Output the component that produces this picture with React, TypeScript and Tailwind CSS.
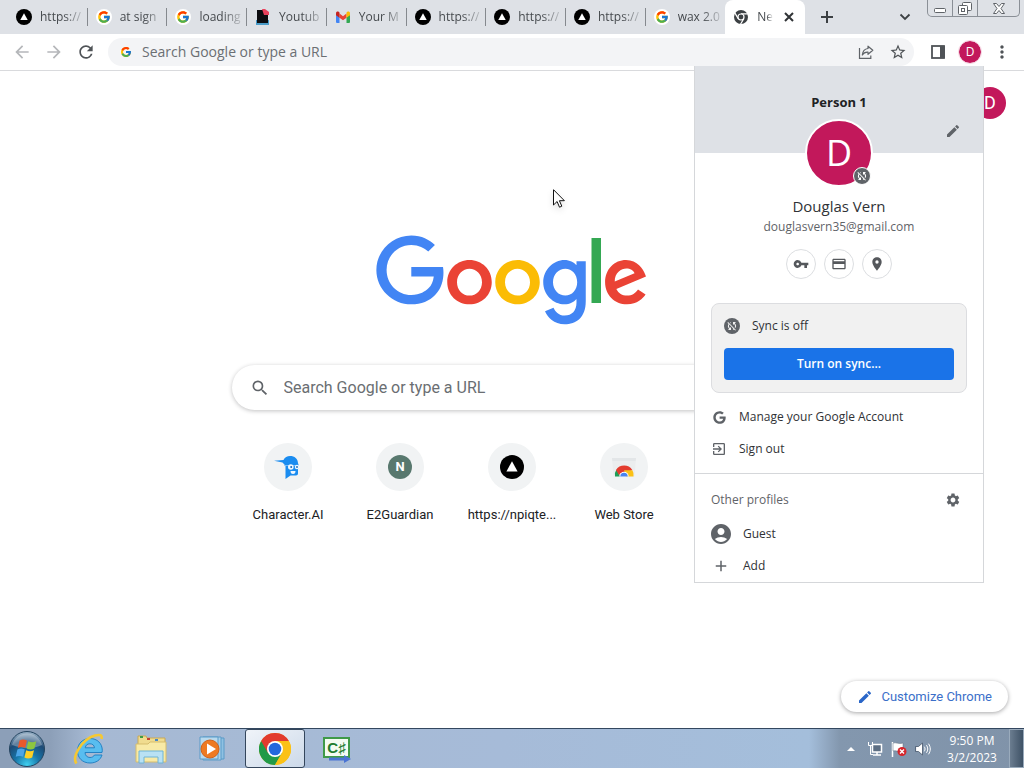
import React from "react";
import { FcGoogle } from "react-icons/fc";
import { FaGoogle } from "react-icons/fa";
import {
  MdAccountCircle,
  MdAdd,
  MdArrowBack,
  MdArrowForward,
  MdCreditCard,
  MdExitToApp,
  MdMoreVert,
  MdPlace,
  MdRefresh,
  MdSearch,
  MdSettings,
  MdStarBorder,
  MdSyncDisabled,
  MdVpnKey,
} from "react-icons/md";

type IconKind = "vercel" | "google" | "file" | "gmail" | "chrome";

const tabs: { icon: IconKind; title: string }[] = [
  { icon: "vercel", title: "https://" },
  { icon: "google", title: "at sign" },
  { icon: "google", title: "loading" },
  { icon: "file", title: "Youtub" },
  { icon: "gmail", title: "Your M" },
  { icon: "vercel", title: "https://" },
  { icon: "vercel", title: "https://" },
  { icon: "vercel", title: "https://" },
  { icon: "google", title: "wax 2.0" },
];

function PencilIcon({ className }: { className: string }) {
  return (
    <svg viewBox="0 0 24 24" className={className} fill="currentColor" aria-hidden="true">
      <path d="M3 17.250V21h3.750L17.810 9.940l-3.750-3.750L3 17.250zM20.710 7.040a1 1 0 0 0 0-1.410l-2.340-2.340a1 1 0 0 0-1.410 0l-1.830 1.830 3.750 3.750 1.830-1.830z" />
    </svg>
  );
}

function TriangleBadge({ className }: { className: string }) {
  return (
    <svg viewBox="0 0 24 24" className={className} aria-hidden="true">
      <circle cx="12" cy="12" r="12" fill="#000" />
      <path d="M12 6.200 17.600 16.500H6.400z" fill="#fff" />
    </svg>
  );
}

function TabIcon({ kind }: { kind: IconKind }) {
  if (kind === "vercel") return <TriangleBadge className="size-4 shrink-0" />;
  if (kind === "google")
    return (
      <span className="flex size-4 shrink-0 items-center justify-center rounded-full bg-white">
        <FcGoogle className="size-[14px]" />
      </span>
    );
  if (kind === "file")
    return (
      <svg viewBox="0 0 16 16" className="size-4 shrink-0" aria-hidden="true">
        <path d="M1 11h13v5H1z" fill="#4a9cc9" />
        <path d="M2 1h7l4 4v9H2z" fill="#0c0d10" />
        <path d="M7 0h3l4 3v3H9z" fill="#e8415c" />
      </svg>
    );
  if (kind === "gmail")
    return (
      <svg viewBox="0 0 16 16" className="size-4 shrink-0" aria-hidden="true">
        <path d="M1 5.500 4.500 8v6H2a1 1 0 0 1-1-1z" fill="#4285f4" />
        <path d="M15 5.500 11.500 8v6H14a1 1 0 0 0 1-1z" fill="#34a853" />
        <path d="M4.500 4.500 8 7.200l3.500-2.700v4.200L8 11.300 4.500 8.700z" fill="#ea4335" />
        <path d="M1 4.300C1 2.700 2.700 2 3.900 2.900l.6.500v5.300L1 6.200z" fill="#c5221f" />
        <path d="M15 4.300c0-1.600-1.700-2.300-2.900-1.400l-.6.500v5.300L15 6.200z" fill="#fbbc04" />
      </svg>
    );
  return (
    <svg viewBox="0 0 16 16" className="size-4 shrink-0" aria-hidden="true">
      <circle cx="8" cy="8" r="7" fill="#3c4043" />
      <circle cx="8" cy="8" r="3.600" fill="#fff" />
      <path d="M8 4.800h7M5.200 9.600 1.700 3.600M10.800 9.600 7.500 15.300" stroke="#fff" strokeWidth="1.200" />
      <circle cx="8" cy="8" r="2.400" fill="#3c4043" />
    </svg>
  );
}

function WindowButtons() {
  return (
    <div className="flex h-[17px] rounded-b-[5px] border border-t-0 border-[#8a8f96] text-[#5f6368]">
      <button aria-label="Minimize" className="flex w-[25px] items-end justify-center border-r border-[#8a8f96] pb-[3px]">
        <svg viewBox="0 0 12 5" className="h-[5px] w-3">
          <rect x=".5" y=".5" width="11" height="4" rx="1" fill="#fff" stroke="#5f6368" />
        </svg>
      </button>
      <button aria-label="Restore" className="flex w-[25px] items-center justify-center border-r border-[#8a8f96]">
        <svg viewBox="0 0 14 13" className="h-[13px] w-[14px]" stroke="#5f6368">
          <rect x="4.500" y=".5" width="9" height="8" rx="1" fill="#fff" />
          <rect x=".5" y="3.500" width="9" height="9" rx="1" fill="#fff" />
          <rect x="3.500" y="6.500" width="3" height="3" fill="#fff" />
        </svg>
      </button>
      <button aria-label="Close window" className="flex w-[41px] items-center justify-center">
        <svg viewBox="0 0 12 11" className="h-[11px] w-3">
          <path d="M.5.5h3L6 3.500 8.500.5h3L8 5.500l3.500 5h-3L6 7.500l-2.500 3h-3L4 5.500z" fill="#fff" stroke="#5f6368" />
        </svg>
      </button>
    </div>
  );
}

function TabStrip() {
  return (
    <div className="flex h-[34px] shrink-0 bg-[#dee1e6] pl-2">
      <div className="flex min-w-0 flex-1">
        {tabs.map((tab, i) => (
          <div key={i} className="flex min-w-0 flex-1 items-center">
            <button className="flex min-w-0 flex-1 items-center gap-2 pl-2 text-xs text-[#45494d]">
              <TabIcon kind={tab.icon} />
              <span className="min-w-0 flex-1 text-left whitespace-nowrap [mask-image:linear-gradient(to_right,black_50%,transparent)]">
                {tab.title}
              </span>
            </button>
            {i < tabs.length - 1 && <span className="h-[18px] w-px bg-[#85898e]" />}
          </div>
        ))}
        <div className="flex min-w-0 flex-1">
          <div className="flex min-w-0 flex-1 items-center gap-2 rounded-t-lg bg-white px-2 text-xs text-[#45494d]">
            <TabIcon kind="chrome" />
            <span className="min-w-0 flex-1 whitespace-nowrap [mask-image:linear-gradient(to_right,black_60%,transparent)]">
              New
            </span>
            <button aria-label="Close tab">
              <svg viewBox="0 0 16 16" className="size-4" stroke="#303336" strokeWidth="2">
                <path d="m4 4 8 8m0-8-8 8" />
              </svg>
            </button>
          </div>
        </div>
      </div>
      <div className="flex w-[219px] shrink-0 items-start">
        <button aria-label="New tab" className="flex h-[34px] w-11 items-center justify-center">
          <svg viewBox="0 0 14 14" className="size-[14px]" stroke="#3c4043" strokeWidth="2">
            <path d="M7 1v12M1 7h12" />
          </svg>
        </button>
        <button aria-label="Search tabs" className="ml-auto flex h-[34px] w-11 items-center justify-center">
          <svg viewBox="0 0 12 12" className="size-3" fill="none" stroke="#3c4043" strokeWidth="1.800">
            <path d="m1.500 3.500 4.500 4.500 4.500-4.500" />
          </svg>
        </button>
        <div className="mr-1">
          <WindowButtons />
        </div>
      </div>
    </div>
  );
}

function Toolbar() {
  return (
    <div className="flex h-[37px] shrink-0 items-center border-b border-[#d9dadd] bg-white px-[6px] text-[#4f5357]">
      <button aria-label="Back" className="flex w-8 justify-center text-[#b5b7ba]">
        <MdArrowBack className="size-5" />
      </button>
      <button aria-label="Forward" className="flex w-8 justify-center text-[#b5b7ba]">
        <MdArrowForward className="size-5" />
      </button>
      <button aria-label="Reload" className="flex w-8 justify-center">
        <MdRefresh className="size-5" />
      </button>
      <div className="ml-[6px] flex h-7 min-w-0 flex-1 items-center rounded-full bg-[#f3f4f6] pl-3">
        <FcGoogle className="size-3 shrink-0" />
        <input
          aria-label="Address"
          placeholder="Search Google or type a URL"
          className="ml-[10px] min-w-0 flex-1 bg-transparent text-sm text-[#5f6368] outline-none placeholder:text-[#6b6f73]"
        />
        <button aria-label="Share" className="flex w-8 justify-center">
          <svg viewBox="0 0 16 16" className="size-4" fill="none" stroke="#5f6368" strokeWidth="1.200">
            <path d="M1.500 4v10.400h11.300v-3" />
            <path d="M10 2.200 14.800 6.300 10 10.300V8.200C7.600 8 5.600 8.900 4.300 11 4.700 7.200 6.700 4.900 10 4.500z" strokeLinejoin="round" />
          </svg>
        </button>
        <button aria-label="Bookmark" className="flex w-8 justify-center">
          <MdStarBorder className="size-[18px]" />
        </button>
      </div>
      <button aria-label="Side panel" className="ml-2 flex w-8 justify-center">
        <svg viewBox="0 0 14 14" className="size-[14px]">
          <rect x="1" y="1" width="12" height="12" fill="#fff" stroke="#4f5357" strokeWidth="1.800" />
          <path d="M9 1h5v12H9z" fill="#4f5357" />
        </svg>
      </button>
      <button aria-label="Profile" className="flex w-8 justify-center">
        <span className="flex size-[22px] items-center justify-center rounded-full bg-[#c2185b] text-xs text-white outline-1 outline-[#f6d5e2]">
          D
        </span>
      </button>
      <button aria-label="Menu" className="flex w-8 justify-center">
        <MdMoreVert className="size-5" />
      </button>
    </div>
  );
}

function GoogleLogo() {
  return (
    <svg viewBox="0 0 272 92" className="h-[92px] w-[272px]" role="img" aria-label="Google">
      <path fill="#EA4335" d="M115.750 47.180c0 12.770-9.990 22.180-22.250 22.180s-22.250-9.410-22.250-22.180C71.250 34.320 81.240 25 93.500 25s22.250 9.320 22.250 22.180zm-9.740 0c0-7.980-5.790-13.440-12.510-13.440S80.990 39.200 80.990 47.180c0 7.900 5.790 13.440 12.510 13.440s12.510-5.550 12.510-13.440z" />
      <path fill="#FBBC05" d="M163.750 47.180c0 12.770-9.990 22.180-22.250 22.180s-22.250-9.410-22.250-22.180c0-12.850 9.990-22.180 22.250-22.180s22.250 9.320 22.250 22.180zm-9.740 0c0-7.980-5.790-13.440-12.510-13.440s-12.510 5.460-12.510 13.440c0 7.900 5.790 13.440 12.510 13.440s12.510-5.550 12.510-13.440z" />
      <path fill="#4285F4" d="M209.750 26.340v39.820c0 16.380-9.660 23.070-21.080 23.070-10.750 0-17.220-7.190-19.660-13.070l8.480-3.530c1.510 3.610 5.210 7.870 11.170 7.870 7.310 0 11.840-4.510 11.840-13v-3.190h-.34c-2.180 2.690-6.380 5.040-11.680 5.040-11.090 0-21.250-9.660-21.250-22.090 0-12.520 10.160-22.260 21.250-22.260 5.290 0 9.490 2.350 11.680 4.960h.34v-3.610h9.250zm-8.560 20.920c0-7.810-5.210-13.520-11.840-13.520-6.720 0-12.350 5.710-12.350 13.520 0 7.730 5.630 13.360 12.350 13.360 6.630 0 11.840-5.630 11.840-13.360z" />
      <path fill="#34A853" d="M225 3v65h-9.500V3h9.500z" />
      <path fill="#EA4335" d="M262.020 54.480l7.560 5.040c-2.440 3.610-8.320 9.830-18.480 9.830-12.600 0-22.010-9.740-22.010-22.180 0-13.190 9.490-22.180 20.920-22.180 11.510 0 17.140 9.160 18.980 14.110l1.010 2.520-29.650 12.280c2.270 4.450 5.800 6.720 10.750 6.720 4.960 0 8.400-2.440 10.920-6.140zm-23.270-7.980l19.820-8.230c-1.090-2.770-4.370-4.700-8.230-4.700-4.950 0-11.840 4.370-11.590 12.930z" />
      <path fill="#4285F4" d="M35.290 41.410V32H67c.31 1.640.47 3.580.47 5.680 0 7.060-1.930 15.790-8.150 22.010-6.050 6.300-13.780 9.660-24.020 9.660C16.320 69.350.36 53.890.36 34.910.36 15.930 16.320.47 35.300.47c10.500 0 17.980 4.120 23.600 9.490l-6.640 6.640c-4.030-3.780-9.490-6.720-16.970-6.720-13.860 0-24.700 11.170-24.700 25.030 0 13.860 10.840 25.030 24.700 25.030 8.990 0 14.110-3.610 17.390-6.890 2.660-2.660 4.410-6.460 5.100-11.650l-22.490.01z" />
    </svg>
  );
}

function CharacterIcon() {
  return (
    <svg viewBox="0 0 28 24" className="h-6 w-7" aria-hidden="true">
      <path d="M0 5.800 9.500 5C10.600 2.500 13.300 1 16 1c4.500 0 8 2.600 8 7.300l.5 1.200v3.500l-.5 1v4.500c0 1.200-.8 2-2 2h-5.500l-5 3.500V10.800l-3-3.200z" fill="#1a8cf0" />
      <path d="M10 10.500h14" stroke="#8ec7fa" strokeWidth=".8" />
      <circle cx="16.800" cy="12" r="2.800" fill="#eef7ff" />
      <circle cx="23" cy="12" r="2.200" fill="#eef7ff" />
      <circle cx="17.200" cy="12" r="1" fill="#1468b8" />
      <circle cx="23" cy="12" r=".9" fill="#1468b8" />
      <path d="M16.500 16h5c0 1.800-.8 3-2.500 3s-2.500-1.200-2.500-3z" fill="#eef7ff" />
    </svg>
  );
}

function WebStoreIcon() {
  return (
    <svg viewBox="0 0 24 24" className="size-6" aria-hidden="true">
      <path d="M0 3h24l-1.500 18.500h-21z" fill="#ebedee" />
      <path d="M0 3h24l-.4 3H.4z" fill="#e3e6e8" />
      <path d="M3 21.500a9.300 9.300 0 0 1 1.500-7L8.500 21.500z" fill="#1e9e57" />
      <path d="M4 15a9.500 9.500 0 0 1 16.300 0L14 18H9l-2 2z" fill="#e33b2e" />
      <path d="M12 15.200h8.400a9.500 9.500 0 0 1 1.100 6.300H14z" fill="#fbc116" />
      <path d="M7.300 21.500a4.700 4.700 0 0 1 9.400 0z" fill="#fff" />
      <path d="M8.300 21.500a3.700 3.700 0 0 1 7.400 0z" fill="#4a83ee" />
    </svg>
  );
}

const shortcuts = [
  { label: "Character.AI", icon: <CharacterIcon /> },
  {
    label: "E2Guardian",
    icon: (
      <span className="flex size-6 items-center justify-center rounded-full bg-[#58786e] text-[13px] font-bold text-white">
        N
      </span>
    ),
  },
  { label: "https://npiqte...", icon: <TriangleBadge className="size-6" /> },
  { label: "Web Store", icon: <WebStoreIcon /> },
];

function NewTabPage() {
  return (
    <main className="flex flex-1 flex-col items-center bg-white font-[Roboto,sans-serif]">
      <header className="flex w-full justify-end pt-4 pr-[18px]">
        <button
          aria-label="Google Account"
          className="flex size-8 items-center justify-center rounded-full bg-[#c2185b] text-lg text-white"
        >
          D
        </button>
      </header>
      <div className="mt-[116px]">
        <GoogleLogo />
      </div>
      <label className="mt-[38px] flex h-[45px] w-[561px] items-center rounded-full bg-white pl-[18px] shadow-[0_1px_4px_rgba(32,33,36,0.28)]">
        <MdSearch className="size-5 text-[#5f6368]" />
        <input
          aria-label="Search"
          placeholder="Search Google or type a URL"
          className="ml-[14px] min-w-0 flex-1 bg-transparent text-base outline-none placeholder:text-[#6a6e72]"
        />
      </label>
      <nav className="mt-[33px] grid w-[560px] grid-cols-5">
        {shortcuts.map((s) => (
          <a key={s.label} href="#" className="flex flex-col items-center gap-[14px] text-[13px] leading-5 text-[#202124]">
            <span className="flex size-12 items-center justify-center rounded-full bg-[#f1f3f4]">{s.icon}</span>
            {s.label}
          </a>
        ))}
      </nav>
      <button className="mt-auto mr-4 mb-4 flex h-[31px] items-center gap-2 self-end rounded-full bg-white px-4 text-[13px] text-[#3b6fc9] shadow-[0_1px_4px_rgba(32,33,36,0.4)]">
        <PencilIcon className="size-4 text-[#2a66c8]" />
        Customize Chrome
      </button>
    </main>
  );
}

function ProfileMenu() {
  return (
    <section
      aria-label="Profile"
      className="absolute top-[66px] right-10 z-10 w-[290px] border border-t-0 border-[#d5d7da] bg-white text-xs text-[#303236]"
    >
      <div className="relative flex h-[87px] flex-col items-center bg-[#dee1e6] pt-[26px]">
        <h2 className="text-[13px] leading-5 font-bold text-[#202124]">Person 1</h2>
        <button aria-label="Edit profile" className="absolute right-[22px] bottom-[14px] text-[#5f6368]">
          <PencilIcon className="size-4" />
        </button>
        <div className="absolute top-[53px] flex size-[68px] items-center justify-center rounded-full border-2 border-white bg-[#c2185b] text-4xl text-white">
          D
          <span className="absolute right-0 bottom-0 flex size-[18px] items-center justify-center rounded-full border border-white bg-[#5f6368]">
            <MdSyncDisabled className="size-3" />
          </span>
        </div>
      </div>
      <div className="flex flex-col items-center pt-[42px]">
        <p className="text-[15px] leading-[22px]">Douglas Vern</p>
        <p className="mt-[2px] leading-4 text-[#5f6368]">douglasvern35@gmail.com</p>
        <div className="mt-[14px] flex gap-2 text-[#55585c]">
          <button aria-label="Passwords" className="flex size-[30px] items-center justify-center rounded-full border border-[#dcdee1]">
            <MdVpnKey className="size-4" />
          </button>
          <button aria-label="Payment methods" className="flex size-[30px] items-center justify-center rounded-full border border-[#dcdee1]">
            <MdCreditCard className="size-4" />
          </button>
          <button aria-label="Addresses" className="flex size-[30px] items-center justify-center rounded-full border border-[#dcdee1]">
            <MdPlace className="size-4" />
          </button>
        </div>
      </div>
      <div className="mx-4 mt-6 rounded-lg border border-[#dcdde0] bg-[#f1f1f1] p-3">
        <div className="flex h-5 items-center gap-3">
          <span className="flex size-4 items-center justify-center rounded-full bg-[#5f6368] text-[#f1f1f1]">
            <MdSyncDisabled className="size-3" />
          </span>
          Sync is off
        </div>
        <button className="mt-3 h-8 w-full rounded bg-[#1a73e8] font-semibold text-white">Turn on sync...</button>
      </div>
      <div className="px-4 py-2">
        <button className="flex h-8 w-full items-center gap-3">
          <span className="flex w-4 justify-center">
            <FaGoogle className="size-[13px] text-[#5f6368]" />
          </span>
          Manage your Google Account
        </button>
        <button className="flex h-8 w-full items-center gap-3">
          <MdExitToApp className="size-4 text-[#5f6368]" />
          Sign out
        </button>
      </div>
      <div className="border-t border-[#d5d7da] px-4 pt-[10px]">
        <div className="flex h-8 items-center justify-between pr-[6px] text-[#5f6368]">
          Other profiles
          <button aria-label="Manage profiles">
            <MdSettings className="size-4" />
          </button>
        </div>
        <button className="mt-[2px] flex h-8 w-full items-center gap-3">
          <MdAccountCircle className="-m-0.5 size-6 text-[#5f6368]" />
          Guest
        </button>
        <button className="flex h-8 w-full items-center gap-3">
          <span className="flex w-5 justify-center">
            <MdAdd className="size-[18px] text-[#5f6368]" />
          </span>
          Add
        </button>
      </div>
    </section>
  );
}

function StartOrb() {
  return (
    <svg viewBox="0 0 38 38" className="size-[38px]" aria-hidden="true">
      <defs>
        <radialGradient id="orb" cx=".5" cy=".95" r=".9">
          <stop offset="0" stopColor="#3fd0f0" />
          <stop offset=".4" stopColor="#1775a8" />
          <stop offset=".75" stopColor="#1d4a75" />
          <stop offset="1" stopColor="#8fa9c0" />
        </radialGradient>
      </defs>
      <circle cx="19" cy="19" r="17.500" fill="url(#orb)" stroke="#24445f" />
      <path d="M4 15a15.500 15.500 0 0 1 30 0c-8 4-20 4-30 0z" fill="#fff" opacity=".3" />
      <path d="M11.500 10.500c2.500-1.300 4.900-1.200 7.400.1l-1.700 7.400c-2.500-1.300-4.900-1.300-7.400 0z" fill="#e8582c" />
      <path d="M20.300 11.200c2.500 1.300 5.200 1.300 8 .1l-1.900 7.300c-2.800 1.200-5.200 1.100-7.800-.2z" fill="#8cc63f" />
      <path d="M9.400 19.400c2.600-1.200 4.900-1.200 7.400.1L15.100 26.800c-2.500-1.200-4.900-1.200-7.400 0z" fill="#4aa5e8" />
      <path d="M18.200 20.200c2.600 1.300 5 1.300 7.800.1l-1.800 7.200c-2.800 1.200-5.200 1.200-7.800 0z" fill="#fdd026" />
    </svg>
  );
}

function ExplorerE() {
  return (
    <svg viewBox="0 0 32 32" className="size-8" aria-hidden="true">
      <path
        d="M29 19.500H12c.2 3.200 2.200 5 5 5 2.200 0 3.700-1 4.500-2.500H29c-1.500 5-6 8-12 8C9.500 30 4.500 25 4.500 17.800S9.700 5.500 17 5.500s12.300 5 12.300 12zM12.200 14.800h9.300c-.3-2.600-2-4-4.600-4s-4.300 1.400-4.700 4z"
        fill="#58bdf0"
        fillRule="evenodd"
        stroke="#2482c4"
      />
      <path d="M3.500 30.500C-1.500 24 9 6 22 2.500c5-1.300 7.500-.5 6.500 3.500" fill="none" stroke="#f5c832" strokeWidth="2.600" />
    </svg>
  );
}

function FolderIcon() {
  return (
    <svg viewBox="0 0 32 30" className="h-[30px] w-8" aria-hidden="true">
      <path d="M3 2h8l1 2h18v22H3z" fill="#f0dc8f" stroke="#c8a957" />
      <path d="M5 2h3v2H5z" fill="#3e9b45" />
      <path d="M12 4h3v2h-3z" fill="#c9412f" />
      <path d="M20 5h3v2h-3z" fill="#4788c8" />
      <path d="M1 10h12l2-2h16v20H1z" fill="#f8eaa6" stroke="#d6bd6c" />
      <path d="M4 29V17h24v12h-5v-6H9v6z" fill="#b9e1f3" stroke="#6fb4d6" />
    </svg>
  );
}

function MediaPlayerIcon() {
  return (
    <svg viewBox="0 0 28 26" className="h-[26px] w-7" aria-hidden="true">
      <path d="M8 2h17v21H8z" fill="#8fc1e2" stroke="#5b9bc8" />
      <path d="M4 1h18v23H4z" fill="#a9d0e8" stroke="#5b9bc8" />
      <path d="M1 1h18v22H1z" fill="#b9daee" stroke="#5b9bc8" />
      <circle cx="11" cy="13" r="9" fill="#ee7a22" stroke="#d1621a" />
      <path d="M8 7.500 17 13l-9 5.500z" fill="#fff" />
    </svg>
  );
}

function ChromeLogo() {
  return (
    <svg viewBox="0 0 32 32" className="size-8" aria-hidden="true">
      <circle cx="16" cy="16" r="16" fill="#fbc116" />
      <path d="M2.140 8A16 16 0 0 0 16 32l6.930-12H16z" fill="#229a48" />
      <path d="M16 16 9.070 20 2.140 8A16 16 0 0 1 29.860 8H16z" fill="#e23b2e" />
      <path d="M16 8h13.860A16 16 0 0 1 16 32l6.930-12z" fill="#fbc116" />
      <circle cx="16" cy="16" r="8" fill="#fff" />
      <circle cx="16" cy="16" r="6.300" fill="#2368dc" />
    </svg>
  );
}

function CSharpIcon() {
  return (
    <svg viewBox="0 0 30 28" className="h-7 w-[30px]" aria-hidden="true">
      <path d="M2 3h25v19H2z" fill="#f4fbf2" stroke="#3f9a48" strokeWidth="2" />
      <text x="14.500" y="18" textAnchor="middle" fontFamily="Liberation Sans" fontWeight="bold" fontSize="15" fill="#217c2f">
        C♯
      </text>
      <path d="M7 22.500h15V20l7 4-7 4v-2.500H7z" fill="#4a74d4" />
    </svg>
  );
}

function Taskbar() {
  return (
    <footer className="flex h-10 shrink-0 items-stretch border-t border-[#33475f] bg-[linear-gradient(to_right,#8c9fb8_0px,#8c9fb8_50px,#a6b9d3_90px,#a6bbd8_500px,#a4bedb_79%,#8397ae_82%,#8093a9_100%)]">
      <button aria-label="Start" className="flex w-[59px] items-center pl-2">
        <StartOrb />
      </button>
      <div className="flex gap-[2px]">
        <button aria-label="Internet Explorer" className="flex w-[60px] items-center justify-center">
          <ExplorerE />
        </button>
        <button aria-label="Windows Explorer" className="flex w-[60px] items-center justify-center">
          <FolderIcon />
        </button>
        <button aria-label="Media Player" className="flex w-[60px] items-center justify-center">
          <MediaPlayerIcon />
        </button>
        <button
          aria-label="Google Chrome"
          className="flex w-[60px] items-center justify-center rounded-[3px] border border-[#34465c] bg-linear-to-br from-[#f0f4f9] to-[#ccd9e9]"
        >
          <ChromeLogo />
        </button>
        <button aria-label="C# editor" className="flex w-[60px] items-center justify-center">
          <CSharpIcon />
        </button>
      </div>
      <div className="ml-auto flex items-center text-white">
        <button aria-label="Show hidden icons" className="flex w-6 justify-center">
          <svg viewBox="0 0 8 4" className="h-1 w-2">
            <path d="M4 0 8 4H0z" fill="#fff" />
          </svg>
        </button>
        <button aria-label="Network" className="flex w-6 justify-center">
          <svg viewBox="0 0 16 16" className="size-4" stroke="#fff" fill="none">
            <path d="M5.500 3.500h9v7.500h-9z" fill="#5d6f84" strokeWidth="1.500" />
            <path d="M10 11v3M6 14h8" strokeWidth="1.500" />
            <path d="M1.500 1v3.500h4V1M3.500 4v9.500H6" />
          </svg>
        </button>
        <button aria-label="Action Center" className="flex w-6 justify-center">
          <svg viewBox="0 0 16 16" className="size-4">
            <path d="M1.500 1v15" stroke="#fff" strokeWidth="1.500" />
            <path d="M2 2c3-1 5 1.500 10 0v8c-5 1.500-7-1-10 0z" fill="#fff" stroke="#5b6a7c" strokeWidth=".5" />
            <circle cx="11" cy="10.500" r="4.500" fill="#d6252b" />
            <path d="m9 8.500 4 4m0-4-4 4" stroke="#fff" strokeWidth="1.400" />
          </svg>
        </button>
        <button aria-label="Volume" className="flex w-6 justify-center">
          <svg viewBox="0 0 16 16" className="size-4" fill="none" stroke="#fff" strokeLinecap="round">
            <path d="M1 5.500h2.500L7.500 2v12l-4-3.500H1z" fill="#fff" stroke="#45566a" strokeWidth=".8" />
            <path d="M9.500 6c.8 1.300.8 2.700 0 4M11.700 4.500c1.500 2.300 1.500 4.700 0 7M13.700 3c2.200 3.300 2.200 6.700 0 10" />
          </svg>
        </button>
        <div className="flex w-[74px] flex-col items-center text-xs leading-[17px]">
          <time>9:50 PM</time>
          <time>3/2/2023</time>
        </div>
        <button
          aria-label="Show desktop"
          className="h-full w-[15px] border border-[#9aabbc] bg-linear-to-r from-[#6b7d90] to-[#3f5266]"
        />
      </div>
    </footer>
  );
}

function Pointer() {
  return (
    <svg viewBox="0 0 12 19" className="pointer-events-none absolute top-[189px] left-[553px] h-[19px] w-3 drop-shadow-md" aria-hidden="true">
      <path d="M.5.700v15.300l3.600-3.500 2.400 5.700 2.300-1-2.400-5.500h5z" fill="#fff" stroke="#111" />
    </svg>
  );
}

export default function App() {
  return (
    <div className="relative flex min-h-screen flex-col bg-white font-['Open_Sans','Noto_Sans',sans-serif]">
      <TabStrip />
      <Toolbar />
      <NewTabPage />
      <Taskbar />
      <ProfileMenu />
      <Pointer />
    </div>
  );
}
